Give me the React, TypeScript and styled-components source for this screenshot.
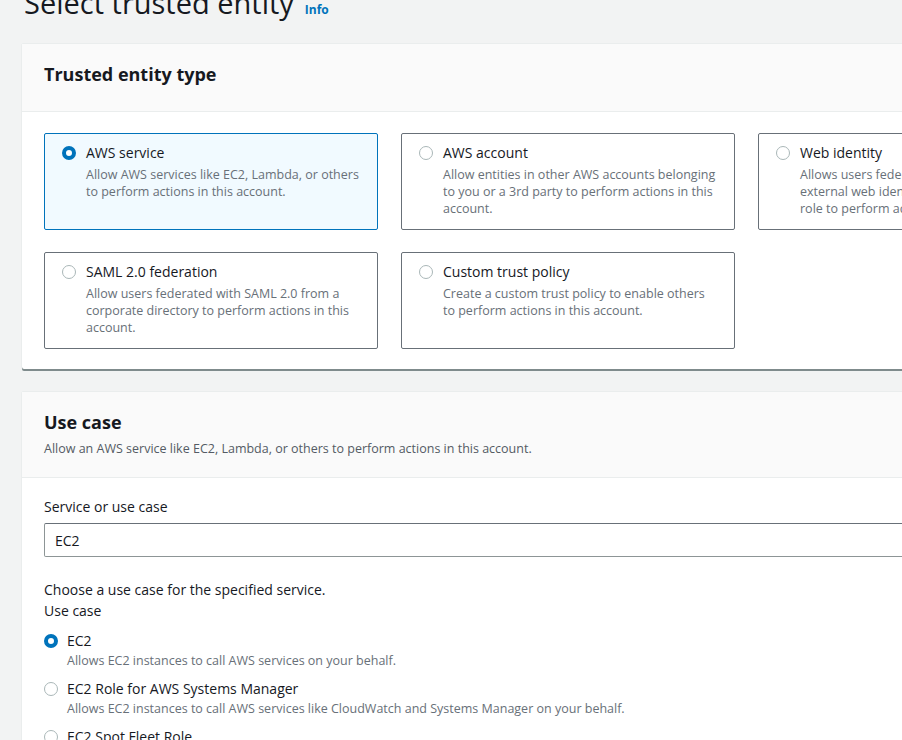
import React from "react";
import styled, { createGlobalStyle } from "styled-components";

const Global = createGlobalStyle`
  html, body {
    margin: 0;
    padding: 0;
    background: #f2f3f3;
    overflow: hidden;
    font-family: "Open Sans", "Liberation Sans", Arial, sans-serif;
    color: #16191f;
  }
  * { box-sizing: border-box; }
`;

const Page = styled.div`
  padding: 0 0 40px 22px;
  width: 1200px;
`;

const TitleRow = styled.div`
  display: flex;
  align-items: baseline;
  gap: 11px;
  margin-top: -13px;
  margin-bottom: 19px;
  margin-left: 2px;
  height: 38px;
`;

const Title = styled.h1`
  margin: 0;
  font-size: 29px;
  line-height: 32px;
  font-weight: 400;
  color: #16191f;
`;

const InfoLink = styled.a`
  font-size: 12px;
  font-weight: 700;
  color: #0073bb;
  text-decoration: none;
`;

const Panel = styled.section`
  width: 1140px;
  background: #ffffff;
  border-radius: 2px;
  box-shadow: 0 2px 0 0 #7f8b8c, 0 0 0 1px #eaeded;
  margin-bottom: 23px;
`;

const PanelHeader = styled.header<{ $pt: number; $pb: number }>`
  background: #fafafa;
  border-bottom: 1px solid #eaeded;
  padding: ${(p) => `${p.$pt}px 22px ${p.$pb}px`};
`;

const PanelTitle = styled.h2`
  margin: 0;
  font-size: 18px;
  line-height: 24px;
  font-weight: 700;
  color: #16191f;
`;

const PanelDesc = styled.p`
  margin: 6px 0 0;
  font-size: 12.5px;
  line-height: 17px;
  color: #545b64;
`;

const PanelBody = styled.div<{ $pt: number; $pb: number }>`
  padding: ${(p) => `${p.$pt}px 22px ${p.$pb}px`};
`;

const CardGrid = styled.div`
  display: grid;
  grid-template-columns: repeat(3, 334px);
  column-gap: 23px;
  row-gap: 22px;
`;

const Card = styled.label<{ $selected?: boolean }>`
  display: flex;
  align-items: flex-start;
  gap: 10px;
  padding: 9px 16px 12px 17px;
  border: 1px solid ${(p) => (p.$selected ? "#0073bb" : "#687078")};
  background: ${(p) => (p.$selected ? "#f1faff" : "#ffffff")};
  border-radius: 2px;
  cursor: pointer;
`;

const RadioDot = styled.span<{ $checked?: boolean }>`
  flex: 0 0 14px;
  width: 14px;
  height: 14px;
  margin-top: 3px;
  border-radius: 50%;
  border: ${(p) => (p.$checked ? "4px solid #0073bb" : "1px solid #aab7b8")};
  background: #ffffff;
`;

const CardText = styled.div`
  display: flex;
  flex-direction: column;
`;

const CardTitle = styled.span`
  font-size: 14px;
  line-height: 20px;
  color: #16191f;
`;

const CardDesc = styled.span`
  margin-top: 3px;
  font-size: 12.5px;
  line-height: 17px;
  color: #687078;
  white-space: pre-line;
`;

const FieldLabel = styled.div`
  font-size: 14px;
  line-height: 20px;
  color: #16191f;
  margin-bottom: 6px;
`;

const TextInput = styled.div`
  height: 34px;
  border: 1px solid #8d9596;
  border-top-color: #687078;
  border-radius: 2px;
  padding: 0 10px;
  display: flex;
  align-items: center;
  font-size: 14px;
  color: #16191f;
`;

const Prompt = styled.div<{ $mt: number }>`
  margin-top: ${(p) => p.$mt}px;
  font-size: 14px;
  line-height: 20px;
  color: #16191f;
`;

const OptionList = styled.div`
  display: flex;
  flex-direction: column;
  gap: 9px;
  margin-top: 10px;
`;

const Option = styled.label`
  display: flex;
  align-items: flex-start;
  gap: 9px;
  cursor: pointer;
`;

const OptionTitle = styled.span`
  font-size: 14px;
  line-height: 20px;
  color: #16191f;
`;

const OptionDesc = styled.span`
  margin-top: 1px;
  font-size: 12.5px;
  line-height: 18px;
  color: #687078;
`;

const entities = [
  {
    title: "AWS service",
    desc: "Allow AWS services like EC2, Lambda, or others to perform actions in this account.",
    selected: true,
  },
  {
    title: "AWS account",
    desc: "Allow entities in other AWS accounts belonging to you or a 3rd party to perform actions in this account.",
  },
  {
    title: "Web identity",
    desc: "Allows users federated by a specified\nexternal web identity provider to assume this role to perform actions in this account.",
  },
  {
    title: "SAML 2.0 federation",
    desc: "Allow users federated with SAML 2.0 from a corporate directory to perform actions in this account.",
  },
  {
    title: "Custom trust policy",
    desc: "Create a custom trust policy to enable others to perform actions in this account.",
  },
];

const useCases = [
  { title: "EC2", desc: "Allows EC2 instances to call AWS services on your behalf.", selected: true },
  {
    title: "EC2 Role for AWS Systems Manager",
    desc: "Allows EC2 instances to call AWS services like CloudWatch and Systems Manager on your behalf.",
  },
  {
    title: "EC2 Spot Fleet Role",
    desc: "Allows EC2 Spot Fleet to request and terminate Spot Instances on your behalf.",
  },
];

export default function App() {
  return (
    <>
      <Global />
      <Page>
        <TitleRow>
          <Title>Select trusted entity</Title>
          <InfoLink href="#">Info</InfoLink>
        </TitleRow>

        <Panel>
          <PanelHeader $pt={18} $pb={25}>
            <PanelTitle>Trusted entity type</PanelTitle>
          </PanelHeader>
          <PanelBody $pt={21} $pb={20}>
            <CardGrid>
              {entities.map((e) => (
                <Card key={e.title} $selected={e.selected}>
                  <RadioDot $checked={e.selected} />
                  <CardText>
                    <CardTitle>{e.title}</CardTitle>
                    <CardDesc>{e.desc}</CardDesc>
                  </CardText>
                </Card>
              ))}
            </CardGrid>
          </PanelBody>
        </Panel>

        <Panel>
          <PanelHeader $pt={18} $pb={20}>
            <PanelTitle>Use case</PanelTitle>
            <PanelDesc>
              Allow an AWS service like EC2, Lambda, or others to perform actions in this account.
            </PanelDesc>
          </PanelHeader>
          <PanelBody $pt={19} $pb={22}>
            <FieldLabel>Service or use case</FieldLabel>
            <TextInput>EC2</TextInput>
            <Prompt $mt={23}>Choose a use case for the specified service.</Prompt>
            <Prompt $mt={1}>Use case</Prompt>
            <OptionList>
              {useCases.map((u) => (
                <Option key={u.title}>
                  <RadioDot $checked={u.selected} />
                  <CardText>
                    <OptionTitle>{u.title}</OptionTitle>
                    <OptionDesc>{u.desc}</OptionDesc>
                  </CardText>
                </Option>
              ))}
            </OptionList>
          </PanelBody>
        </Panel>
      </Page>
    </>
  );
}
